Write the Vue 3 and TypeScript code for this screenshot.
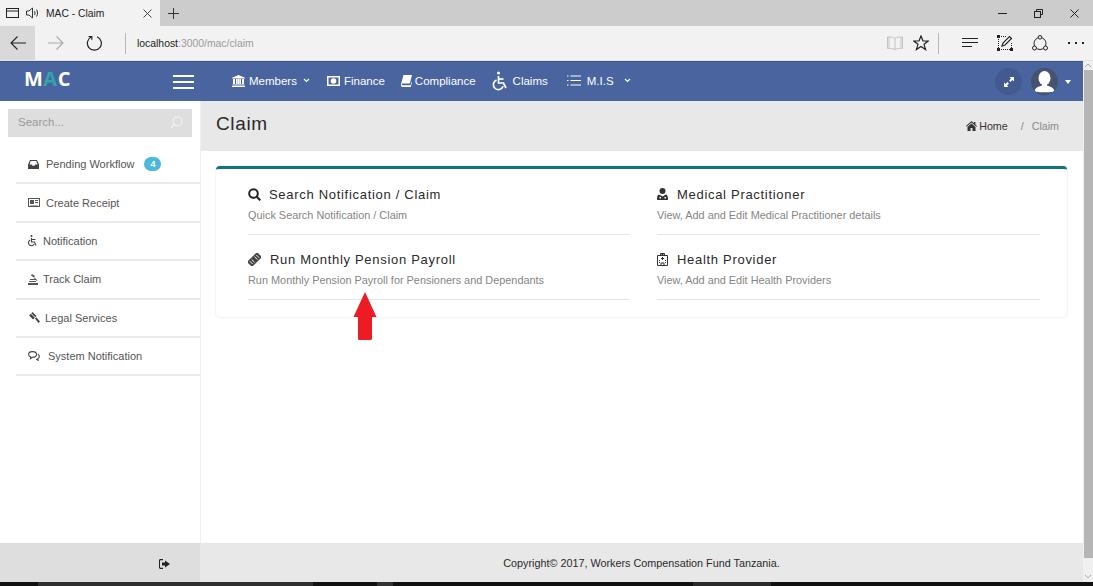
<script setup lang="ts">
interface SideItem {
  label: string;
  icon: string;
  gap: number;
  badge?: number;
}

interface ClaimLink {
  title: string;
  sub: string;
  icon: string;
  iconWidth: number;
}

const sideItems: SideItem[] = [
  { label: "Pending Workflow", icon: "inbox", gap: 7, badge: 4 },
  { label: "Create Receipt", icon: "receipt", gap: 6 },
  { label: "Notification", icon: "wheel", gap: 6 },
  { label: "Track Claim", icon: "track", gap: 5 },
  { label: "Legal Services", icon: "gavel", gap: 5 },
  { label: "System Notification", icon: "chat", gap: 8 },
];

const claimLinks: ClaimLink[] = [
  { title: "Search Notification / Claim", sub: "Quick Search Notification / Claim", icon: "search", iconWidth: 21 },
  { title: "Medical Practitioner", sub: "View, Add and Edit Medical Practitioner details", icon: "doctor", iconWidth: 20 },
  { title: "Run Monthly Pension Payroll", sub: "Run Monthly Pension Payroll for Pensioners and Dependants", icon: "ticket", iconWidth: 22 },
  { title: "Health Provider", sub: "View, Add and Edit Health Providers", icon: "hospital", iconWidth: 20 },
];

const gapStyle = (gap: number) => ({ marginRight: gap + "px" });
const iconStyle = (width: number) => ({ width: width + "px" });
</script>

<template>
  <div class="screen">
    <div class="tabbar">
      <div class="tab">
        <svg class="tab-page" width="13" height="10" viewBox="0 0 13 10" fill="none" stroke="#222">
          <rect x=".5" y=".5" width="12" height="9" />
          <path d="M.5 3h12" />
        </svg>
        <svg class="tab-sound" width="14" height="12" viewBox="0 0 14 12" fill="none" stroke="#333">
          <path d="M.5 4h2.500L6.500 1v10L3 8H.5z" />
          <path d="M8.500 4c.7 1.300.7 2.700 0 4M10.500 2.500c1.400 2.200 1.400 4.800 0 7" />
        </svg>
        <span class="tab-title">MAC - Claim</span>
        <svg class="tab-close" width="9" height="9" viewBox="0 0 9 9" stroke="#444">
          <path d="M.5.500l8 8M8.500.500l-8 8" />
        </svg>
      </div>
      <svg class="tab-new" width="11" height="11" viewBox="0 0 11 11" stroke="#333">
        <path d="M5.500 0v11M0 5.500h11" />
      </svg>
      <div class="window-btns">
        <svg width="9" height="9" viewBox="0 0 9 9" stroke="#222"><path d="M0 4.500h9" /></svg>
        <svg width="9" height="9" viewBox="0 0 9 9" fill="none" stroke="#222">
          <path d="M2.500 2V.500h6v5H7" />
          <rect x=".5" y="2.500" width="6" height="6" />
        </svg>
        <svg width="9" height="9" viewBox="0 0 9 9" stroke="#222"><path d="M.500.500l8 8M8.500.500l-8 8" /></svg>
      </div>
    </div>

    <div class="toolbar">
      <div class="back-btn">
        <svg width="16" height="14" viewBox="0 0 16 14" fill="none" stroke="#222" stroke-width="1.100">
          <path d="M16 7H1M7.500.500L1 7l6.500 6.500" />
        </svg>
      </div>
      <svg class="forward" width="16" height="14" viewBox="0 0 16 14" fill="none" stroke="#a8a8a8" stroke-width="1.100">
        <path d="M0 7h15M8.500.500L15 7l-6.500 6.500" />
      </svg>
      <svg class="reload" width="16" height="16" viewBox="0 0 16 16" fill="none" stroke="#222" stroke-width="1.200">
        <path d="M5.500 1.800A7 7 0 1 0 11 1.700" />
        <path d="M2.500 1.500h3.300v3.300" />
      </svg>
      <span class="tool-sep"></span>
      <div class="address"><b>localhost</b>:3000/mac/claim</div>
      <svg class="tool-book" width="16" height="14" viewBox="0 0 16 14" fill="none" stroke="#c4c4c4">
        <path d="M8 2.500C6.500 1 3 .8.500 1v11.500c2.500-.2 6 0 7.500 1 1.500-1 5-1.200 7.500-1V1C13 .8 9.500 1 8 2.500zM8 2.500v11M2 1v11M14 1v11" />
      </svg>
      <svg class="tool-star" width="16" height="16" viewBox="0 0 16 16" fill="none" stroke="#222" stroke-width="1.200">
        <path d="M8 1l2 5h5.200l-4.200 3.300 1.600 5.300L8 11.400l-4.600 3.200L5 9.300.8 6H6z" />
      </svg>
      <span class="tool-sep second"></span>
      <svg class="tool-hub" width="16" height="10" viewBox="0 0 16 10" stroke="#222" stroke-width="1.100">
        <path d="M0 .500h16M0 4.500h16M0 8.500h10" />
      </svg>
      <svg class="tool-note" width="16" height="16" viewBox="0 0 16 16" fill="none" stroke="#222">
        <path d="M2 1.500h8M2 14.500h12M1.500 2v12M14.500 8v6" stroke-dasharray="1 1" />
        <path d="M0 0h3v3H0zM0 13h3v3H0zM13 13h3v3h-3z" fill="#222" stroke="none" />
        <path d="M5 11l1-3 6.500-6.500 2 2L8 10z" fill="#fff" stroke-width="1.200" />
      </svg>
      <svg class="tool-share" width="16" height="16" viewBox="0 0 16 16" fill="none" stroke="#222">
        <circle cx="8" cy="8.500" r="6" />
        <circle cx="8" cy="2.300" r="1.800" fill="#f2f2f2" />
        <circle cx="2.500" cy="13" r="2" fill="#f2f2f2" />
        <circle cx="13.500" cy="13" r="2" fill="#f2f2f2" />
      </svg>
      <div class="tool-more"><i></i><i></i><i></i></div>
    </div>

    <div class="app-row">
      <div class="app-col">
        <header class="navbar">
          <div class="brand">M<span>A</span>C</div>
          <div class="burger"><i></i><i></i><i></i></div>
          <nav class="nav-links">
            <a class="nav-link members">
              <svg width="13" height="12" viewBox="0 0 13 12" fill="#fff">
                <path d="M6.500 0L13 2.700v.8H0v-.8zM1 4h2v5H1zM4 4h1.500v5H4zM7.500 4H9v5H7.500zM10 4h2v5h-2zM5.800 4h1.400v5H5.800zM.5 9.500h12v1H.5zM0 11h13v1H0z" />
              </svg>
              Members
              <svg class="chev" width="7" height="5" viewBox="0 0 7 5" fill="none" stroke="#fff" stroke-width="1.200"><path d="M1 1l2.500 2.500L6 1" /></svg>
            </a>
            <a class="nav-link finance">
              <svg width="13" height="10" viewBox="0 0 13 10" fill="#fff">
                <path fill-rule="evenodd" d="M0 0h13v10H0zM1.500 1.500v7h10v-7zM6.500 2.200a2.800 2.800 0 1 1 0 5.600 2.800 2.800 0 0 1 0-5.600z" />
              </svg>
              Finance
            </a>
            <a class="nav-link compliance">
              <svg width="11" height="12" viewBox="0 0 11 12" fill="#fff">
                <path d="M2.500 0H11L8.800 8.500H1.200c-.6 0-.6 1.800.2 1.800h8.200l.9-3.500.5.500-1.200 4.700H1.200C0 12-.3 10.300.2 8.500z" />
              </svg>
              Compliance
            </a>
            <a class="nav-link claims">
              <svg width="16" height="20" viewBox="0 0 16 20" fill="none" stroke="#fff" stroke-width="1.700">
                <circle cx="6.500" cy="2" r="1.500" fill="#fff" stroke="none" />
                <path d="M6.500 5v7h5l2.500 5" />
                <path d="M6.500 8h5" />
                <path d="M4.500 9a5 5 0 1 0 6.600 6.300" />
              </svg>
              Claims
            </a>
            <a class="nav-link mis">
              <svg width="14" height="11" viewBox="0 0 14 11" stroke="#fff">
                <path d="M0 1h1.500M0 5.500h1.500M0 10h1.500M3.500 1H14M3.500 5.500H14M3.500 10H14" />
              </svg>
              M.I.S
              <svg class="chev" width="7" height="5" viewBox="0 0 7 5" fill="none" stroke="#fff" stroke-width="1.200"><path d="M1 1l2.500 2.500L6 1" /></svg>
            </a>
          </nav>
          <div class="nav-right">
            <div class="round-btn">
              <svg width="10" height="10" viewBox="0 0 10 10" fill="#fff">
                <path d="M5.500 0H10v4.500L8.400 3 6.500 4.900 5.100 3.500 7 1.600zM4.500 10H0V5.500L1.600 7l1.900-1.900 1.400 1.400L3 8.400z" />
              </svg>
            </div>
            <div class="avatar">
              <svg width="27" height="27" viewBox="0 0 28 28" fill="#fff">
                <ellipse cx="14" cy="10.500" rx="6.200" ry="7.500" />
                <path d="M4 24c0-3.500 3.500-4.500 7-5.500l1-2h4l1 2c3.500 1 7 2 7 5.500-2 1.500-18 1.500-20 0z" />
              </svg>
            </div>
            <span class="caret"></span>
          </div>
        </header>

        <div class="body-row">
          <aside class="sidebar">
            <div class="side-search">
              <span>Search...</span>
              <svg width="13" height="13" viewBox="0 0 13 13" fill="none" stroke="#f4f4f4" stroke-width="1.100">
                <circle cx="7.500" cy="5.500" r="4.500" />
                <path d="M4.300 8.700L1 12" />
              </svg>
            </div>
            <ul class="side-menu">
              <li v-for="item in sideItems" :key="item.label" class="side-item">
                <span class="side-icon" :style="gapStyle(item.gap)">
                  <svg v-if="item.icon === 'inbox'" width="11" height="9" viewBox="0 0 11 9" fill="#444">
                    <path fill-rule="evenodd" d="M2 0h7l2 4.500V9H0V4.500zM2.700 1L1.500 4.500h2.300l.7 1.200h2l.7-1.200h2.300L8.300 1z" />
                  </svg>
                  <svg v-else-if="item.icon === 'receipt'" width="12" height="9" viewBox="0 0 12 9" fill="#555">
                    <path fill-rule="evenodd" d="M0 0h12v9H0zM1 1v7h10V1zM2 2h4v4H2zM7 2h3v1H7zM7 4h3v1H7zM2 7h8v.500H2z" />
                  </svg>
                  <svg v-else-if="item.icon === 'wheel'" width="9" height="12" viewBox="0 0 9 12" fill="none" stroke="#444" stroke-width="1.100">
                    <circle cx="3.500" cy="1" r="1" fill="#444" stroke="none" />
                    <path d="M3.500 3v4h3L8 10.500M3.500 4.500h4" />
                    <path d="M2.200 5a3 3 0 1 0 4 4" />
                  </svg>
                  <svg v-else-if="item.icon === 'track'" width="10" height="11" viewBox="0 0 10 11" fill="#555">
                    <path d="M4 0l3 2-1 1.500L3 1.500zM0 9h10v2H0zM1 7h7v1H1zM2 5h6v1H2zM6.500 3.500l3 3-.7.500-3-3z" />
                  </svg>
                  <svg v-else-if="item.icon === 'gavel'" width="12" height="11" viewBox="0 0 12 11" fill="#444">
                    <path d="M4.500 0l4 4-1.200 1.200-4-4zM2.800 1.700l4 4-1.700 1.700-4-4zM7 6.500l1.200-1.200L12 9.500 10.500 11z" />
                  </svg>
                  <svg v-else width="12" height="10" viewBox="0 0 12 10" fill="none" stroke="#444" stroke-width="1.100">
                    <path d="M4.500.600c2.300 0 4 1.200 4 2.800s-1.700 2.800-4 2.800l-2 1.300.3-1.600C1.400 5.400.6 4.500.6 3.400.6 1.800 2.300.600 4.500.600z" />
                    <path d="M9.800 3.200c1 .6 1.600 1.400 1.600 2.300 0 1-.7 1.800-1.700 2.300l.4 1.500-2-1.200" />
                  </svg>
                </span>
                <span class="side-label">{{ item.label }}</span>
                <span v-if="item.badge" class="side-badge">{{ item.badge }}</span>
              </li>
            </ul>
          </aside>

          <main class="content">
            <div class="page-head">
              <h1>Claim</h1>
              <div class="crumbs">
                <svg width="11" height="10" viewBox="0 0 11 10" fill="#333">
                  <path d="M5.500 0L8 2.200V1h1.400v2.500L11 5l-.6.700L5.500 1.500.6 5.700 0 5zM5.500 2.500L9.500 6v4H6.500V7h-2v3h-3V6z" />
                </svg>
                <span class="crumb-home">Home</span>
                <span class="crumb-sep">/</span>
                <span class="crumb-now">Claim</span>
              </div>
            </div>
            <div class="page-body">
              <section class="card">
                <a v-for="link in claimLinks" :key="link.title" class="claim-link">
                  <div class="claim-title">
                    <span class="claim-icon" :style="iconStyle(link.iconWidth)">
                      <svg v-if="link.icon === 'search'" width="13" height="13" viewBox="0 0 13 13" fill="none" stroke="#222" stroke-width="2">
                        <circle cx="5.500" cy="5.500" r="4.300" />
                        <path d="M8.700 8.700L12.300 12.300" />
                      </svg>
                      <svg v-else-if="link.icon === 'doctor'" width="11" height="12" viewBox="0 0 11 12" fill="#333">
                        <circle cx="5.500" cy="3" r="3" />
                        <path fill-rule="evenodd" d="M2 6.500l3.500 2 3.500-2c1.500.3 2 2 2 5.500H0c0-3.500.5-5.200 2-5.500zM2.500 9v1.500H4V9zM7.500 9v1.500H9V9z" />
                      </svg>
                      <svg v-else-if="link.icon === 'ticket'" width="13" height="13" viewBox="0 0 13 13">
                        <g transform="rotate(-45 6.500 6.500)">
                          <rect x="-.5" y="3" width="14" height="7" fill="#444" />
                          <path d="M2 4.500v4M4.500 4.500v4M8.500 4.500v4M11 4.500v4" stroke="#fff" stroke-width=".9" />
                        </g>
                      </svg>
                      <svg v-else width="11" height="13" viewBox="0 0 11 13" fill="none" stroke="#333">
                        <path d="M3.500 2.500V.500h4v2M.5 2.500h10v10H.5z" />
                        <path d="M4.500 1.500h2M5.500 4v3M4 5.500h3M2 7.500h1M8 7.500h1M4 12.500V10h3v2.500M2 9.500h1M8 9.500h1" />
                      </svg>
                    </span>
                    {{ link.title }}
                  </div>
                  <div class="claim-sub">{{ link.sub }}</div>
                </a>
                <svg class="red-arrow" width="24" height="48" viewBox="0 0 24 48">
                  <path d="M12 0l11.500 25H19v21.500c0 .8-.5 1.500-1.300 1.500H6.300c-.8 0-1.300-.7-1.300-1.500V25H.5z" fill="#ed1c24" />
                </svg>
              </section>
            </div>
          </main>
        </div>

        <footer class="footer">
          <div class="footer-left">
            <svg width="11" height="10" viewBox="0 0 11 10" fill="#222">
              <path d="M4 0v1.200H1.500c-.3 0-.5.200-.5.500v6.600c0 .3.200.5.500.5H4V10H1.500C.5 10 0 9.300 0 8.300V1.700C0 .7.500 0 1.500 0z" />
              <path d="M6 1.500L11 5 6 8.500V6.500H3v-3h3z" />
            </svg>
          </div>
          <div class="footer-main">Copyright© 2017, Workers Compensation Fund Tanzania.</div>
        </footer>
      </div>

      <div class="scrollbar">
        <svg class="scroll-up" width="8" height="5" viewBox="0 0 8 5" fill="none" stroke="#aaa"><path d="M1 4l3-3 3 3" /></svg>
        <div class="scroll-thumb"></div>
        <svg class="scroll-down" width="8" height="5" viewBox="0 0 8 5" fill="none" stroke="#aaa"><path d="M1 1l3 3 3-3" /></svg>
      </div>
    </div>
    <div class="taskbar"></div>
  </div>
</template>

<style scoped>
.screen {
  width: 1093px;
  height: 586px;
  display: flex;
  flex-direction: column;
  overflow: hidden;
  background: #fff;
  font-family: "Liberation Sans", Arial, sans-serif;
}

/* browser chrome */
.tabbar {
  height: 26px;
  flex: none;
  display: flex;
  align-items: center;
  background: #cccccc;
}

.tab {
  width: 160px;
  height: 26px;
  display: flex;
  align-items: center;
  background: #f2f2f2;
}

.tab-page {
  margin-left: 6px;
}

.tab-sound {
  margin-left: 7px;
}

.tab-title {
  margin-left: 6px;
  width: 97px;
  font-size: 10.300px;
  color: #222;
}

.tab-new {
  margin-left: 8px;
}

.window-btns {
  margin-left: auto;
  display: flex;
  gap: 27px;
  padding-right: 14px;
  align-items: center;
}

.toolbar {
  height: 35px;
  flex: none;
  display: flex;
  align-items: center;
  background: #f2f2f2;
  border-bottom: 1px solid #e2e2e2;
  box-sizing: border-box;
}

.back-btn {
  width: 35px;
  height: 34px;
  display: flex;
  align-items: center;
  justify-content: center;
  background: #d9d9d9;
}

.forward {
  margin-left: 13px;
}

.reload {
  margin-left: 22px;
}

.tool-sep {
  width: 1px;
  height: 21px;
  margin-left: 23px;
  background: #b8b8b8;
}

.tool-sep.second {
  margin-left: 9px;
}

.address {
  margin-left: 11px;
  width: 750px;
  font-size: 10.400px;
  color: #9a9a9a;
}

.address b {
  font-weight: 400;
  color: #222;
}

.tool-star {
  margin-left: 10px;
}

.tool-hub {
  margin-left: 23px;
}

.tool-note {
  margin-left: 19px;
}

.tool-share {
  margin-left: 19px;
}

.tool-more {
  margin-left: 20px;
  display: flex;
  gap: 5px;
}

.tool-more i {
  width: 2px;
  height: 2px;
  background: #222;
}

.app-row {
  flex: 1;
  min-height: 0;
  display: flex;
}

.app-col {
  flex: 1;
  min-width: 0;
  display: flex;
  flex-direction: column;
}

/* app navbar */
.navbar {
  height: 40px;
  flex: none;
  display: flex;
  align-items: center;
  background: #4a64a0;
  color: #fff;
  padding-right: 12px;
  border-top: 1px solid #3f568c;
  box-sizing: border-box;
}

.brand {
  width: 173px;
  padding-left: 24px;
  box-sizing: border-box;
  font-size: 20px;
  font-weight: 700;
  letter-spacing: .5px;
  font-family: "Open Sans", sans-serif;
  color: #fff;
  margin-top: -6px;
}

.brand span {
  color: #2fa6ab;
}

.burger {
  width: 21px;
  display: flex;
  flex-direction: column;
  gap: 4px;
}

.burger i {
  height: 2px;
  background: #fff;
}

.nav-links {
  display: flex;
  align-items: center;
  margin-left: 38px;
  padding-bottom: 2px;
  font-size: 11.500px;
}

.nav-link {
  display: flex;
  align-items: center;
  gap: 4px;
  color: #fff;
}

.finance {
  margin-left: 17px;
}

.compliance {
  margin-left: 16px;
  gap: 3px;
}

.claims {
  margin-left: 16px;
  gap: 5px;
}

.mis {
  margin-left: 19px;
  gap: 6px;
}

.chev {
  margin-left: 2px;
}

.mis .chev {
  margin-left: 4px;
}

.nav-right {
  margin-left: auto;
  display: flex;
  align-items: center;
}

.round-btn {
  width: 27px;
  height: 27px;
  border-radius: 50%;
  display: flex;
  align-items: center;
  justify-content: center;
  background: #435a90;
}

.avatar {
  width: 27px;
  height: 27px;
  margin-left: 9px;
  border-radius: 50%;
  overflow: hidden;
  background: #45536f;
}

.caret {
  width: 0;
  height: 0;
  margin-left: 7px;
  border-left: 3.500px solid transparent;
  border-right: 3.500px solid transparent;
  border-top: 4px solid #fff;
}

/* sidebar */
.body-row {
  flex: 1;
  min-height: 0;
  display: flex;
}

.sidebar {
  width: 201px;
  flex: none;
  box-sizing: border-box;
  border-right: 1px solid #eef0f4;
  padding-top: 8px;
}

.side-search {
  width: 184px;
  height: 28px;
  margin-left: 8px;
  padding: 0 9px 2px 10px;
  box-sizing: border-box;
  display: flex;
  align-items: center;
  justify-content: space-between;
  background: #dedede;
  font-size: 11.500px;
  color: #9a9a9a;
}

.side-menu {
  list-style: none;
  margin: 9px 0 0 16px;
  padding: 0;
}

.side-item {
  height: 38.400px;
  box-sizing: border-box;
  display: flex;
  align-items: center;
  padding-left: 12px;
  border-bottom: 2px solid #e8e9ee;
  font-size: 11px;
  color: #555;
}

.side-icon {
  display: flex;
  align-items: center;
}

.side-badge {
  width: 17px;
  height: 14px;
  margin-left: 10px;
  border-radius: 7px;
  background: #4cb8db;
  color: #fff;
  font-size: 9px;
  font-weight: 700;
  line-height: 14px;
  text-align: center;
}

/* content */
.content {
  flex: 1;
  min-width: 0;
  display: flex;
  flex-direction: column;
}

.page-head {
  height: 50px;
  flex: none;
  display: flex;
  align-items: center;
  justify-content: space-between;
  padding: 0 24px 4px 15px;
  box-sizing: border-box;
  background: #e8e8e8;
}

.page-head h1 {
  margin: 0;
  font-size: 19px;
  font-weight: 400;
  color: #2a2a2a;
  letter-spacing: .65px;
}

.crumbs {
  display: flex;
  align-items: center;
  font-size: 10.700px;
  margin-top: 4px;
}

.crumb-home {
  margin-left: 2px;
  color: #333;
}

.crumb-sep {
  margin: 0 8px 0 13px;
  color: #888;
}

.crumb-now {
  color: #8a8a8a;
}

.page-body {
  padding: 15px 16px 0 15px;
}

.card {
  position: relative;
  height: 151px;
  box-sizing: border-box;
  padding: 11px 27px 0 32px;
  display: grid;
  grid-template-columns: 382px 383px;
  column-gap: 27px;
  grid-auto-rows: 65px;
  background: #fff;
  border-top: 3px solid #0e757c;
  border-radius: 4px;
  box-shadow: 0 0 2px rgba(0, 0, 0, 0.16);
}

.claim-link {
  display: block;
  box-sizing: border-box;
  padding-top: 5px;
  border-bottom: 1px solid #e4e5ea;
  height: 55px;
}

.claim-title {
  display: flex;
  align-items: center;
  height: 18px;
  font-size: 13px;
  letter-spacing: .7px;
  color: #2a2a2a;
}

.claim-icon {
  flex: none;
  display: flex;
  align-items: center;
}

.claim-sub {
  margin-top: 6px;
  font-size: 10.900px;
  color: #858585;
}

.red-arrow {
  position: absolute;
  left: 137px;
  top: 123px;
}

/* scrollbar of the page */
.scrollbar {
  position: relative;
  width: 10px;
  flex: none;
  background: #f0f0f0;
}

.scroll-thumb {
  position: absolute;
  top: 9px;
  left: 1px;
  right: 0;
  bottom: 24px;
  background: #b5b5b5;
}

.scroll-up {
  position: absolute;
  top: 2px;
  left: 1px;
}

.scroll-down {
  position: absolute;
  bottom: 3px;
  left: 1px;
}

/* footer */
.footer {
  height: 39px;
  flex: none;
  display: flex;
  background: #e8e8e8;
}

.footer-left {
  width: 200px;
  box-sizing: border-box;
  padding: 12px 0 0 159px;
  background: #dedede;
}

.footer-main {
  flex: 1;
  text-align: center;
  padding-top: 14px;
  font-size: 10.800px;
  color: #2a2a2a;
}

.taskbar {
  height: 4px;
  flex: none;
  background: linear-gradient(90deg, #111 38px, #2f2f2f 38px, #2f2f2f 313px, #111 313px, #111 377px, #333 377px, #333 393px, #111 393px, #111 693px, #2a2a2a 693px, #2a2a2a 771px, #111 771px);
}
</style>
